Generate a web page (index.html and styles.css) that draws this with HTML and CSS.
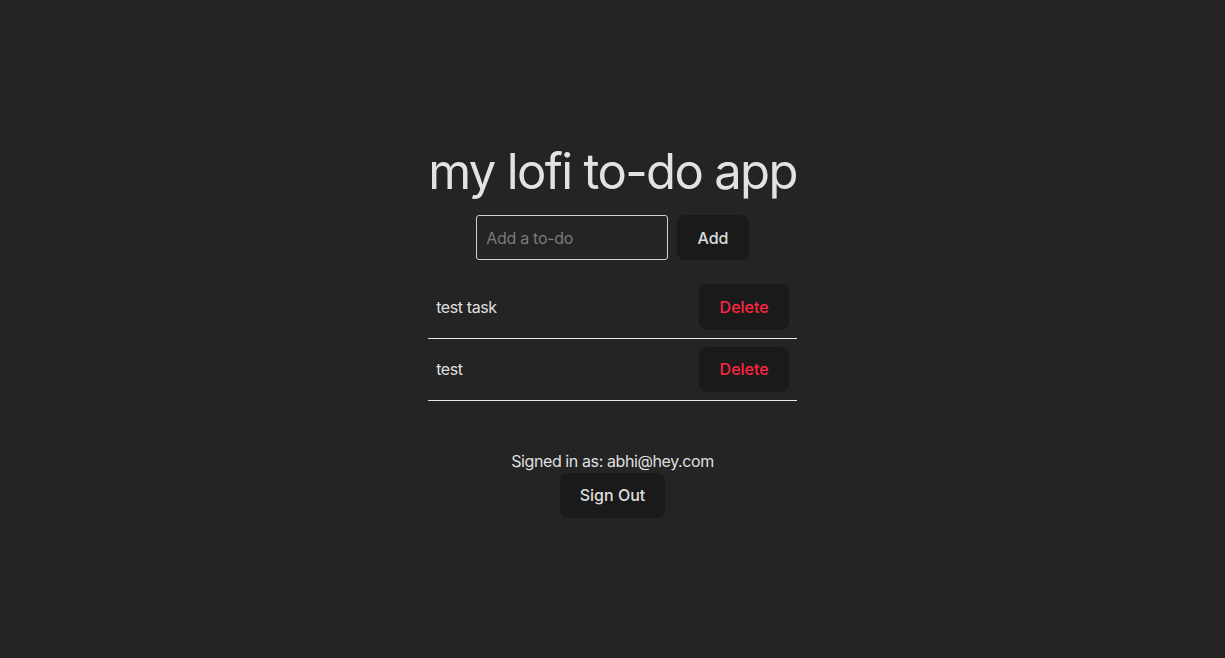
FILE: index.html
```html
<!DOCTYPE html>
<html lang="en">
<head>
<meta charset="UTF-8">
<title>my lofi to-do app</title>
<link rel="stylesheet" href="styles.css">
</head>
<body>
<div class="app">
  <h1 class="title">my lofi to-do app</h1>
  <form class="add-form">
    <input class="todo-input" type="text" placeholder="Add a to-do">
    <button class="btn" type="button">Add</button>
  </form>
  <ul class="todo-list">
    <li class="todo-item"><span class="todo-text">test task</span><button class="btn btn-delete" type="button">Delete</button></li>
    <li class="todo-item"><span class="todo-text">test</span><button class="btn btn-delete" type="button">Delete</button></li>
  </ul>
  <div class="account">
    <p class="signed-in">Signed in as: abhi@hey.com</p>
    <button class="btn" type="button">Sign Out</button>
  </div>
</div>
</body>
</html>
```

FILE: styles.css
```css
html, body {
  margin: 0;
  padding: 0;
}
body {
  box-sizing: border-box;
  padding-top: 4px;
  background: #242424;
  color: rgba(255, 255, 255, 0.87);
  font-family: Inter, "Noto Sans", sans-serif;
  font-size: 16px;
  line-height: 1.5;
  min-height: 100vh;
  display: flex;
  align-items: center;
  justify-content: center;
}
.app {
  display: flex;
  flex-direction: column;
  align-items: center;
}
.title {
  margin: 0 0 15px;
  font-size: 49px;
  line-height: 1.15;
  font-weight: 400;
  letter-spacing: -1.65px;
}
.add-form {
  display: flex;
  gap: 9px;
  align-items: stretch;
  margin: 0;
}
.todo-input {
  box-sizing: border-box;
  width: 192px;
  height: 45px;
  padding: 0 9px;
  background: transparent;
  border: 1px solid #d0d0d0;
  border-radius: 3px;
  color: rgba(255, 255, 255, 0.87);
  font-family: Inter, "Noto Sans", sans-serif;
  font-size: 16px;
  letter-spacing: -0.3px;
  outline: none;
}
.todo-input::placeholder {
  color: #7a7a7a;
}
.btn {
  border-radius: 8px;
  border: 1px solid transparent;
  padding: 0.6em 1.2em;
  font-size: 16px;
  font-weight: 500;
  font-family: Inter, "Noto Sans", sans-serif;
  line-height: 1.5;
  background-color: #1a1a1a;
  color: rgba(255, 255, 255, 0.87);
  cursor: pointer;
}
.btn-delete {
  color: #ff2442;
}
.todo-list {
  list-style: none;
  margin: 16px 0 0;
  padding: 0;
  align-self: stretch;
}
.todo-item {
  display: flex;
  justify-content: space-between;
  align-items: center;
  padding: 8px;
  border-bottom: 1px solid #e6e6e6;
}
.todo-text {
  text-align: left;
  letter-spacing: -0.4px;
}
.account {
  margin-top: 48px;
  display: flex;
  flex-direction: column;
  align-items: center;
}
.signed-in {
  margin: 0;
  letter-spacing: -0.4px;
}
```
